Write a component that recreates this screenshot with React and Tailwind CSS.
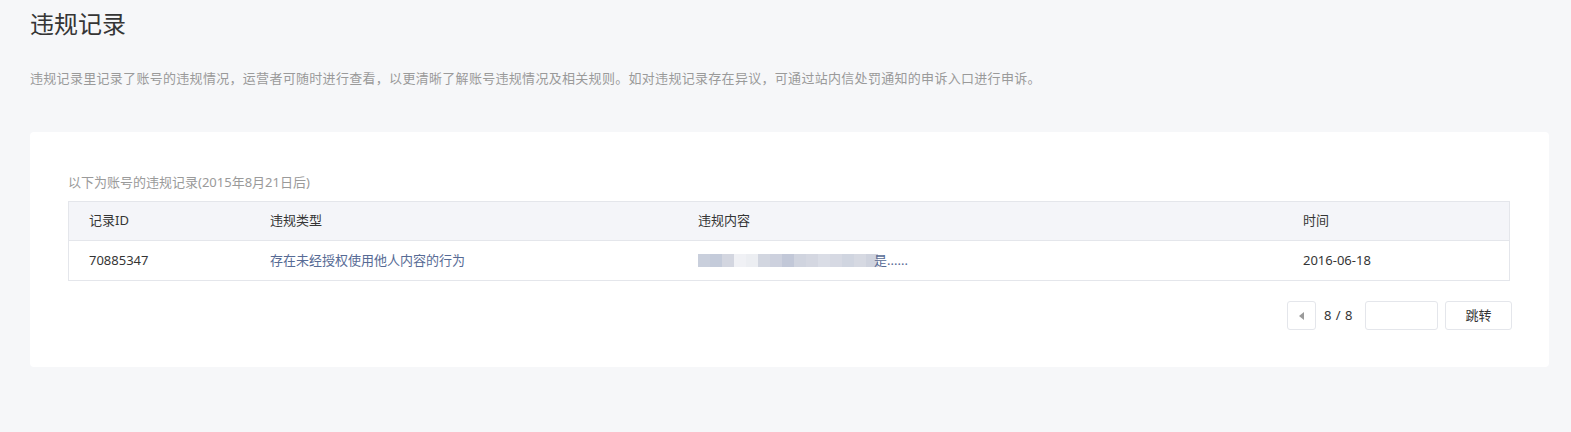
import React from "react";

const blurBlocks = [
  "#c9cfdc", "#c4cbda", "#d3d6e0", "#f0f1f5", "#eceef2", "#d2d6e0",
  "#cdd1de", "#c2c8d8", "#d0d4df", "#d4d7e1", "#dadde6", "#d6d9e3",
  "#d0d5e0", "#d6d9e2", "#cfd3de",
];

const App = () => {
  return (
    <div
      className="min-h-screen bg-[#f6f7f9] px-[30px] pt-2 pb-10"
      style={{ fontFamily: '"Noto Sans", "Noto Sans CJK SC", sans-serif' }}
    >
      {/* Page title */}
      <h1 className="text-[24px] leading-8 text-[#353535] font-normal">违规记录</h1>
      <p className="mt-7 text-[13px] leading-5 tracking-[0.3px] text-[#9a9a9a]">
        违规记录里记录了账号的违规情况，运营者可随时进行查看，以更清晰了解账号违规情况及相关规则。如对违规记录存在异议，可通过站内信处罚通知的申诉入口进行申诉。
      </p>

      {/* Record card */}
      <div className="mt-[44px] w-[1519px] bg-white rounded-sm px-[38px] pt-10 pb-[37px]">
        <p className="text-[13px] leading-5 text-[#9a9a9a]">以下为账号的违规记录(2015年8月21日后)</p>

        <div className="mt-[9px] w-[1442px] border border-[#e4e6eb] text-[13px] text-[#353535]">
          <div className="grid grid-cols-[181px_428px_605px_1fr] h-[39px] items-center bg-[#f4f5f9] border-b border-[#e4e6eb]">
            <div className="px-5">记录ID</div>
            <div className="px-5">违规类型</div>
            <div className="px-5">违规内容</div>
            <div className="px-5">时间</div>
          </div>
          <div className="grid grid-cols-[181px_428px_605px_1fr] h-[39px] items-center">
            <div className="px-5">70885347</div>
            <div className="px-5 text-[#576b95]">存在未经授权使用他人内容的行为</div>
            <div className="px-5 flex items-center text-[#576b95]">
              {/* pixelated content */}
              <div className="flex items-center">
                {blurBlocks.map((c, i) => (
                  <span key={i} className="block w-3 h-[13px]" style={{ backgroundColor: c }} />
                ))}
              </div>
              <span className="-ml-1">是......</span>
            </div>
            <div className="px-5">2016-06-18</div>
          </div>
        </div>

        {/* Pagination */}
        <div className="mt-5 w-[1444px] flex justify-end items-center text-[13px] text-[#353535]">
          <button className="w-[29px] h-[29px] border border-[#e4e6eb] rounded-[3px] bg-white flex items-center justify-center">
            <svg width="5" height="8" viewBox="0 0 5 8">
              <path d="M5 0 L0 4 L5 8 Z" fill="#9a9a9a" />
            </svg>
          </button>
          <span className="ml-2 mr-3 tracking-[0.5px]">8 / 8</span>
          <input className="w-[73px] h-[29px] border border-[#e4e6eb] rounded-[3px] bg-white outline-none px-2" />
          <button className="ml-[7px] w-[67px] h-[29px] border border-[#e4e6eb] rounded-[3px] bg-white">跳转</button>
        </div>
      </div>
    </div>
  );
};

export default App;
